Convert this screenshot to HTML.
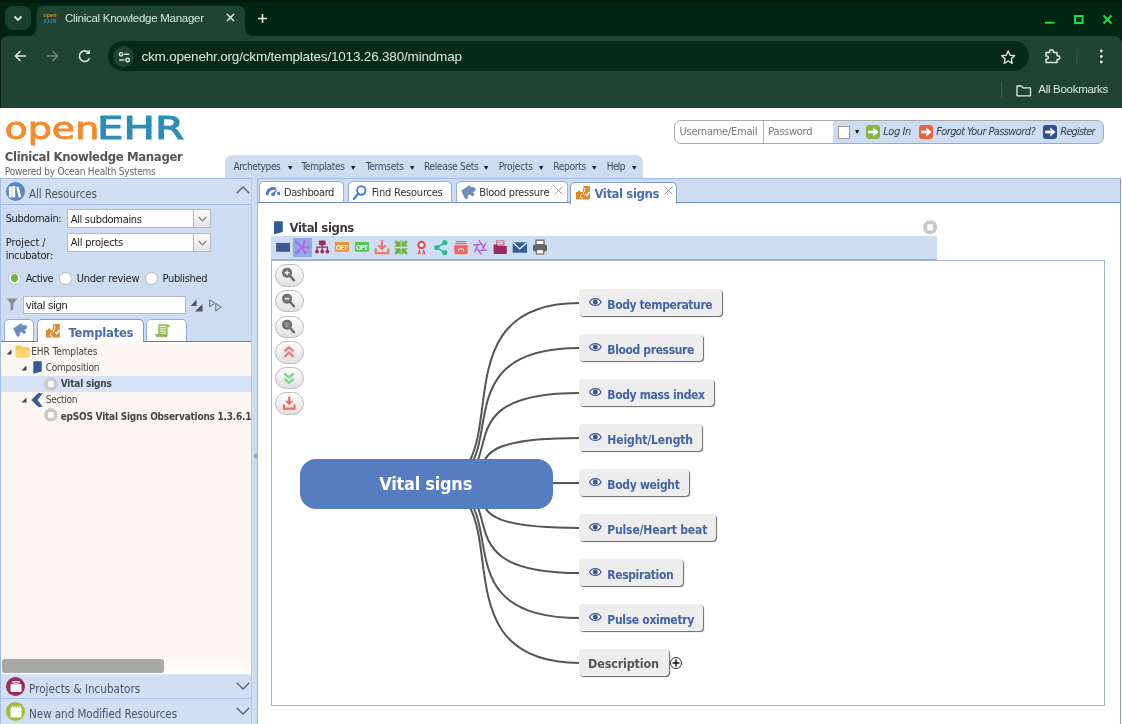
<!DOCTYPE html>
<html lang="en"><head><meta charset="utf-8"><title>Clinical Knowledge Manager</title>
<style>
*{box-sizing:border-box;margin:0;padding:0}
html,body{width:1122px;height:724px;overflow:hidden;background:#fff}
body{position:relative;font-family:'DejaVu Sans Condensed','DejaVu Sans','Liberation Sans',sans-serif;font-size:11px;color:#333;font-stretch:condensed}
.a{position:absolute}
.t{position:absolute;white-space:nowrap;display:block}
svg{position:absolute;overflow:visible}
#app{position:absolute;left:0;top:0;width:1122px;height:724px;will-change:transform}
/* chrome */
#chrome{position:absolute;left:0;top:0;width:1122px;height:108.5px;background:#012513}
#toolbar{position:absolute;left:0;top:36px;width:1122px;height:72.5px;background:#1f4432;border-radius:8px 8px 0 0}
#omni{position:absolute;left:108.4px;top:41.1px;width:920.3px;height:30px;border-radius:15px;background:#052a19}
#siteinfo{position:absolute;left:112.8px;top:45.8px;width:21.2px;height:21.2px;border-radius:50%;background:#1f4432}
#tabsearch{position:absolute;left:5px;top:6px;width:26px;height:24px;border-radius:8px;background:#1a4030}
/* app */
#hdr{position:absolute;left:0;top:108px;width:1122px;height:70px;background:#fff}
#menubar{position:absolute;left:225px;top:155px;width:418px;height:24px;background:#cedcf2;border-radius:7px 7px 0 0}
#login{position:absolute;left:674px;top:120px;width:429.5px;height:23.6px;border:1px solid #a9a9a9;border-radius:7px;background:#cedcf2;overflow:hidden}
#west{position:absolute;left:0;top:178px;width:252px;height:546px;background:#cedcf2;border:1px solid #a3bde6;border-right-color:#b4ccef;border-bottom:0}
#split{position:absolute;left:252px;top:178px;width:5px;height:546px;background:#cfddf3}
#center{position:absolute;left:257px;top:178px;width:864px;height:546px;background:#fff;border:1px solid #a2b8de;border-top-color:#9dbbe5;border-right-color:#7f9ccc;border-bottom:0}
#tabstrip{position:absolute;left:258px;top:179px;width:862px;height:24px;background:#cedcf2;border-bottom:1px solid #6f8dc0}
.tab{position:absolute;top:181px;height:21px;background:#fff;border:1px solid #8db2e3;border-bottom:0;border-radius:5px 5px 0 0}
.combo{position:absolute;left:67.3px;width:143.5px;height:19.2px;background:#fff;border:1px solid #b5b8c8}
.combo i{position:absolute;right:0;top:0;width:17px;height:17.2px;border-left:1px solid #b5b8c8;background:linear-gradient(#fdfdfd,#e2e2e2)}
.radio{position:absolute;top:272px;width:12.5px;height:12.5px;border-radius:50%;background:#fff;border:1px solid #b8b8b8}
.phdr{position:absolute;left:1px;width:250px;height:25px;background:#d2dff3;border-top:1px solid #a9c3ea}
.circ{position:absolute;left:5.9px;width:19px;height:19px;border-radius:50%}
.ltab{position:absolute;top:318.6px;height:22.4px;background:#fff;border:1px solid #8db2e3;border-bottom:0;border-radius:5px 5px 0 0}
#tree{position:absolute;left:1px;top:342px;width:250px;height:332px;background:#fbf6f1}
#tbar{position:absolute;left:271px;top:236.3px;width:666px;height:23.7px;background:#cfddf3;border-bottom:1px solid #9db2d6}
#mm{position:absolute;left:271px;top:260px;width:834px;height:446px;border:1px solid #a2b5d8;background:#fff}
.zb{position:absolute;left:275px;width:29px;height:22.6px;border:1px solid #bdbdbd;border-radius:11.3px;background:linear-gradient(#fdfdfd,#e0e0e0)}
.node{position:absolute;left:579.2px;height:26.8px;background:#ededed;border-radius:4px;box-shadow:1px 1px 1px #666}
#root{position:absolute;left:300px;top:459px;width:253px;height:50px;border-radius:16px;background:#557dbf}
</style></head>
<body>
<div id="app">

<div id="chrome">
 <div class="a" style="left:0;top:0;width:1122px;height:3px;background:#011c0d"></div>
 <div id="toolbar"></div><div class="a" style="left:0;top:0;width:1px;height:108px;background:#0a2014"></div>
 <div id="tabsearch"></div>
 <svg style="left:0;top:0" width="1122" height="108" viewBox="0 0 1122 108">
  <path d="M27.5,36.2 Q36.4,36 36.4,27 L36.4,14 Q36.4,5.7 44.6,5.7 L237,5.7 Q245.2,5.7 245.2,14 L245.2,27 Q245.2,36 254.2,36.2 Z" fill="#1f4432"/>
  <path d="M14.5,16.5 l3.5,3.5 l3.5,-3.5" fill="none" stroke="#e4ece6" stroke-width="1.8"/>
  <path d="M227,14 l7,7 M234,14 l-7,7" stroke="#e4ece6" stroke-width="1.5"/>
  <path d="M262.5,14 v9 M258,18.5 h9" stroke="#e4ece6" stroke-width="1.6"/>
  <path d="M1045,22.7 h9.5" stroke="#1fe030" stroke-width="2"/>
  <rect x="1075" y="16" width="7.5" height="7" fill="none" stroke="#1fe030" stroke-width="2"/>
  <path d="M1103.5,15.5 l8,8 M1111.5,15.5 l-8,8" stroke="#1fe030" stroke-width="2"/>
  <!-- nav -->
  <path d="M26,56 h-10 M20.5,51 l-5,5 l5,5" fill="none" stroke="#dfe8e1" stroke-width="1.6"/>
  <path d="M47,56 h10 M52.5,51 l5,5 l-5,5" fill="none" stroke="#6d8677" stroke-width="1.6"/>
  <path d="M89,53 A5.3,5.3 0 1 0 89.6,58.2" fill="none" stroke="#dfe8e1" stroke-width="1.6"/>
  <path d="M90,49.5 v4.5 h-4.5 z" fill="#dfe8e1"/>
 </svg>
 <div id="omni"></div><div id="siteinfo"></div>
 <svg style="left:0;top:0" width="1122" height="108" viewBox="0 0 1122 108">
  <circle cx="121.1" cy="54.3" r="1.7" fill="none" stroke="#dfe8e1" stroke-width="1.4"/>
  <path d="M124.4,54.3 h4.8 M119.2,60 h5.2" stroke="#dfe8e1" stroke-width="1.5"/>
  <circle cx="127.6" cy="60" r="1.7" fill="none" stroke="#dfe8e1" stroke-width="1.4"/>
  <path d="M1008.2,51 l1.9,4.2 l4.6,0.5 l-3.4,3.1 l0.9,4.5 l-4,-2.3 l-4,2.3 l0.9,-4.5 l-3.4,-3.1 l4.6,-0.5 z" fill="none" stroke="#dfe8e1" stroke-width="1.4" stroke-linejoin="round"/>
  <path d="M1046,52.5 h3.6 v-0.9 a1.9,1.9 0 0 1 3.8,0 v0.9 h3.6 v3.2 h0.9 a1.9,1.9 0 0 1 0,3.8 h-0.9 v3 h-11 v-3.2 h0.7 a1.7,1.7 0 0 0 0,-3.4 h-0.7 z" fill="none" stroke="#dfe8e1" stroke-width="1.5" stroke-linejoin="round"/>
  <path d="M1077,49 v15" stroke="#3d5a49" stroke-width="1"/>
  <circle cx="1101.3" cy="51" r="1.4" fill="#dfe8e1"/><circle cx="1101.3" cy="56.5" r="1.4" fill="#dfe8e1"/><circle cx="1101.3" cy="62" r="1.4" fill="#dfe8e1"/>
  <path d="M1001.5,82 v16" stroke="#3d5a49" stroke-width="1"/>
  <path d="M1017,86 h4.5 l1.5,1.8 h7.5 v8 h-13.5 z" fill="none" stroke="#dfe8e1" stroke-width="1.3" stroke-linejoin="round"/>
 </svg>
 <span class="t " style="left:43.30px;top:11px;line-height:9px;font-family:'Liberation Sans',sans-serif;font-size:5.5px;font-weight:700;color:#f0861f;letter-spacing:0.020px;">open</span>
 <span class="t " style="left:44.00px;top:17px;line-height:9px;font-family:'Liberation Sans',sans-serif;font-size:5.5px;font-weight:700;color:#2e8fc0;letter-spacing:0.388px;">EHR</span>
 <span class="t " style="left:65.00px;top:10px;line-height:17px;font-family:'Liberation Sans',sans-serif;font-size:11.5px;font-weight:400;color:#d9e9de;letter-spacing:-0.270px;">Clinical Knowledge Manager</span>
 <span class="t " style="left:141.40px;top:47px;line-height:20px;font-family:'Liberation Sans',sans-serif;font-size:13.5px;font-weight:400;color:#dcebe1;letter-spacing:-0.184px;">ckm.openehr.org/ckm/templates/1013.26.380/mindmap</span>
 <span class="t " style="left:1038.30px;top:81px;line-height:17px;font-family:'Liberation Sans',sans-serif;font-size:11.5px;font-weight:400;color:#dfe8e1;letter-spacing:-0.292px;">All Bookmarks</span>
</div>


<div id="hdr"></div>
<svg style="left:0;top:108px" width="200" height="45" viewBox="0 108 200 45">
 <text x="4.4" y="139.4" style="font-stretch:normal" font-family="'DejaVu Sans','Liberation Sans',sans-serif" font-size="30.8" fill="#f58a2c" stroke="#f58a2c" stroke-width="0.9" textLength="95" lengthAdjust="spacingAndGlyphs">open</text>
 <text x="97" y="139.4" style="font-stretch:normal" font-family="'DejaVu Sans','Liberation Sans',sans-serif" font-size="32.3" fill="#2c8db9" stroke="#2c8db9" stroke-width="1.1" textLength="87" lengthAdjust="spacingAndGlyphs">EHR</text>
</svg>
<span class="t " style="left:4.80px;top:147px;line-height:19px;font-family:'DejaVu Sans Condensed','DejaVu Sans','Liberation Sans',sans-serif;font-size:13px;font-weight:700;color:#555;letter-spacing:-0.343px;">Clinical Knowledge Manager</span>
<span class="t " style="left:4.80px;top:164px;line-height:15px;font-family:'DejaVu Sans Condensed','DejaVu Sans','Liberation Sans',sans-serif;font-size:10px;font-weight:400;color:#666;letter-spacing:-0.207px;">Powered by Ocean Health Systems</span>
<div id="menubar"></div>
<span class="t " style="left:233.40px;top:159px;line-height:15px;font-family:'DejaVu Sans Condensed','DejaVu Sans','Liberation Sans',sans-serif;font-size:10px;font-weight:400;color:#3d4a5c;letter-spacing:-0.357px;">Archetypes</span><svg style="left:287.7px;top:165.8px" width="4.3" height="4" viewBox="0 0 4.6 4.2"><path d="M0,0 H4.6 L2.3,4.2 Z" fill="#1a1a1a"/></svg><span class="t " style="left:301.40px;top:159px;line-height:15px;font-family:'DejaVu Sans Condensed','DejaVu Sans','Liberation Sans',sans-serif;font-size:10px;font-weight:400;color:#3d4a5c;letter-spacing:-0.247px;">Templates</span><svg style="left:351.0px;top:165.8px" width="4.3" height="4" viewBox="0 0 4.6 4.2"><path d="M0,0 H4.6 L2.3,4.2 Z" fill="#1a1a1a"/></svg><span class="t " style="left:365.70px;top:159px;line-height:15px;font-family:'DejaVu Sans Condensed','DejaVu Sans','Liberation Sans',sans-serif;font-size:10px;font-weight:400;color:#3d4a5c;letter-spacing:-0.252px;">Termsets</span><svg style="left:409.5px;top:165.8px" width="4.3" height="4" viewBox="0 0 4.6 4.2"><path d="M0,0 H4.6 L2.3,4.2 Z" fill="#1a1a1a"/></svg><span class="t " style="left:424.00px;top:159px;line-height:15px;font-family:'DejaVu Sans Condensed','DejaVu Sans','Liberation Sans',sans-serif;font-size:10px;font-weight:400;color:#3d4a5c;letter-spacing:-0.249px;">Release Sets</span><svg style="left:484.2px;top:165.8px" width="4.3" height="4" viewBox="0 0 4.6 4.2"><path d="M0,0 H4.6 L2.3,4.2 Z" fill="#1a1a1a"/></svg><span class="t " style="left:498.70px;top:159px;line-height:15px;font-family:'DejaVu Sans Condensed','DejaVu Sans','Liberation Sans',sans-serif;font-size:10px;font-weight:400;color:#3d4a5c;letter-spacing:-0.162px;">Projects</span><svg style="left:539.2px;top:165.8px" width="4.3" height="4" viewBox="0 0 4.6 4.2"><path d="M0,0 H4.6 L2.3,4.2 Z" fill="#1a1a1a"/></svg><span class="t " style="left:553.20px;top:159px;line-height:15px;font-family:'DejaVu Sans Condensed','DejaVu Sans','Liberation Sans',sans-serif;font-size:10px;font-weight:400;color:#3d4a5c;letter-spacing:-0.245px;">Reports</span><svg style="left:592.0px;top:165.8px" width="4.3" height="4" viewBox="0 0 4.6 4.2"><path d="M0,0 H4.6 L2.3,4.2 Z" fill="#1a1a1a"/></svg><span class="t " style="left:606.70px;top:159px;line-height:15px;font-family:'DejaVu Sans Condensed','DejaVu Sans','Liberation Sans',sans-serif;font-size:10px;font-weight:400;color:#3d4a5c;letter-spacing:-0.577px;">Help</span><svg style="left:631.7px;top:165.8px" width="4.3" height="4" viewBox="0 0 4.6 4.2"><path d="M0,0 H4.6 L2.3,4.2 Z" fill="#1a1a1a"/></svg>
<div id="login">
 <div class="a" style="left:0;top:0;width:89px;height:22.3px;background:#fff;border-right:1px solid #b5b5b5"></div>
 <div class="a" style="left:89px;top:0;width:69px;height:22.3px;background:#fff"></div>
 <div class="a" style="left:163px;top:5.2px;width:12.4px;height:12.4px;background:#fff;border:1px solid #9a9a9a"></div>
</div>
<svg style="left:855.1px;top:129.70000000000002px" width="4.3" height="4" viewBox="0 0 4.6 4.2"><path d="M0,0 H4.6 L2.3,4.2 Z" fill="#1a1a1a"/></svg>
<span class="t " style="left:679.50px;top:124px;line-height:16px;font-family:'DejaVu Sans Condensed','DejaVu Sans','Liberation Sans',sans-serif;font-size:11px;font-weight:400;color:#777;letter-spacing:-0.249px;">Username/Email</span>
<span class="t " style="left:768.20px;top:124px;line-height:16px;font-family:'DejaVu Sans Condensed','DejaVu Sans','Liberation Sans',sans-serif;font-size:11px;font-weight:400;color:#777;letter-spacing:-0.265px;">Password</span>
<svg style="left:866px;top:125px" width="14" height="14" viewBox="0 0 14 14"><rect width="14" height="14" rx="3" fill="#86b446"/><path d="M2.2,7 h7.5" fill="none" stroke="#fff" stroke-width="2.7"/><path d="M7.2,2.4 L12.6,7 L7.2,11.6 L7.2,9.3 L9.4,7 L7.2,4.7 Z" fill="#fff"/></svg><span class="t " style="left:883.20px;top:124px;line-height:16px;font-family:'DejaVu Sans Condensed','DejaVu Sans','Liberation Sans',sans-serif;font-size:11px;font-weight:400;color:#33404f;font-style:italic;letter-spacing:-0.438px;">Log In</span>
<svg style="left:919px;top:125px" width="14" height="14" viewBox="0 0 14 14"><rect width="14" height="14" rx="3" fill="#e8623c"/><path d="M2.2,7 h7.5" fill="none" stroke="#fff" stroke-width="2.7"/><path d="M7.2,2.4 L12.6,7 L7.2,11.6 L7.2,9.3 L9.4,7 L7.2,4.7 Z" fill="#fff"/></svg><span class="t " style="left:936.20px;top:124px;line-height:16px;font-family:'DejaVu Sans Condensed','DejaVu Sans','Liberation Sans',sans-serif;font-size:11px;font-weight:400;color:#33404f;font-style:italic;letter-spacing:-0.607px;">Forgot Your Password?</span>
<svg style="left:1043.3px;top:125px" width="14" height="14" viewBox="0 0 14 14"><rect width="14" height="14" rx="3" fill="#2f4f8f"/><path d="M2.2,7 h7.5" fill="none" stroke="#fff" stroke-width="2.7"/><path d="M7.2,2.4 L12.6,7 L7.2,11.6 L7.2,9.3 L9.4,7 L7.2,4.7 Z" fill="#fff"/></svg><span class="t " style="left:1060.20px;top:124px;line-height:16px;font-family:'DejaVu Sans Condensed','DejaVu Sans','Liberation Sans',sans-serif;font-size:11px;font-weight:400;color:#33404f;font-style:italic;letter-spacing:-0.815px;">Register</span>


<div id="west"></div><div class="a" style="left:1px;top:179px;width:250px;height:25px;background:#d2dff3"></div>
<div class="a" style="left:1px;top:204px;width:250px;height:1px;background:#99bbe8"></div>
<div class="circ" style="top:181.8px;background:#5b84c9"></div>
<svg style="left:5.4px;top:181.8px" width="20" height="20" viewBox="0 0 20 20">
 <rect x="3.9" y="4.6" width="2.9" height="11" rx="0.6" fill="#fff"/><rect x="7.3" y="4" width="2.9" height="11.6" rx="0.6" fill="#fff"/>
 <path d="M11.2,5.2 l2.5,-0.7 l2.6,10.4 l-2.5,0.7 z" fill="#fff"/>
</svg>
<span class="t " style="left:29.00px;top:186px;line-height:17px;font-family:'DejaVu Sans Condensed','DejaVu Sans','Liberation Sans',sans-serif;font-size:11.5px;font-weight:400;color:#485362;letter-spacing:-0.073px;">All Resources</span>
<svg style="left:236px;top:186px" width="14" height="8" viewBox="0 0 14 8"><path d="M0.7,7.3 L7,1 L13.3,7.3" fill="none" stroke="#56627a" stroke-width="1.3"/></svg>
<span class="t " style="left:5.70px;top:211px;line-height:16px;font-family:'DejaVu Sans Condensed','DejaVu Sans','Liberation Sans',sans-serif;font-size:11px;font-weight:400;color:#222;letter-spacing:-0.361px;">Subdomain:</span>
<div class="combo" style="top:209.3px"><i></i></div><svg style="left:198px;top:216.3px" width="9" height="6" viewBox="0 0 9 6"><path d="M0.6,0.8 L4.5,4.8 L8.4,0.8" fill="none" stroke="#777" stroke-width="1.2"/></svg>
<span class="t " style="left:70.70px;top:212px;line-height:16px;font-family:'DejaVu Sans Condensed','DejaVu Sans','Liberation Sans',sans-serif;font-size:11px;font-weight:400;color:#222;letter-spacing:-0.312px;">All subdomains</span>
<span class="t " style="left:5.70px;top:235px;line-height:16px;font-family:'DejaVu Sans Condensed','DejaVu Sans','Liberation Sans',sans-serif;font-size:11px;font-weight:400;color:#222;letter-spacing:-0.037px;">Project /</span>
<span class="t " style="left:5.70px;top:248px;line-height:16px;font-family:'DejaVu Sans Condensed','DejaVu Sans','Liberation Sans',sans-serif;font-size:11px;font-weight:400;color:#222;letter-spacing:-0.293px;">incubator:</span>
<div class="combo" style="top:233.3px"><i></i></div><svg style="left:198px;top:240.3px" width="9" height="6" viewBox="0 0 9 6"><path d="M0.6,0.8 L4.5,4.8 L8.4,0.8" fill="none" stroke="#777" stroke-width="1.2"/></svg>
<span class="t " style="left:70.70px;top:235px;line-height:16px;font-family:'DejaVu Sans Condensed','DejaVu Sans','Liberation Sans',sans-serif;font-size:11px;font-weight:400;color:#222;letter-spacing:-0.217px;">All projects</span>
<div class="radio" style="left:8.2px"></div><div class="a" style="left:10.65px;top:274.45px;width:7.6px;height:7.6px;border-radius:50%;background:#6cb33f"></div>
<div class="radio" style="left:59.1px"></div><div class="radio" style="left:145.2px"></div>
<span class="t " style="left:25.70px;top:271px;line-height:16px;font-family:'DejaVu Sans Condensed','DejaVu Sans','Liberation Sans',sans-serif;font-size:11px;font-weight:400;color:#222;letter-spacing:-0.519px;">Active</span>
<span class="t " style="left:76.70px;top:271px;line-height:16px;font-family:'DejaVu Sans Condensed','DejaVu Sans','Liberation Sans',sans-serif;font-size:11px;font-weight:400;color:#222;letter-spacing:-0.274px;">Under review</span>
<span class="t " style="left:162.50px;top:271px;line-height:16px;font-family:'DejaVu Sans Condensed','DejaVu Sans','Liberation Sans',sans-serif;font-size:11px;font-weight:400;color:#222;letter-spacing:-0.330px;">Published</span>
<svg style="left:5.9px;top:298.3px" width="12" height="13.2" viewBox="0 0 13 15"><path d="M0.3,0.5 H12.7 L8,6.5 V12.5 L5,14.5 V6.5 Z" fill="#8a8a8a"/></svg>
<div class="a" style="left:23px;top:296px;width:163px;height:18px;background:#fff;border:1px solid #b5b8c8"></div>
<span class="t " style="left:26.00px;top:297px;line-height:16px;font-family:'Liberation Sans',sans-serif;font-size:11px;font-weight:400;color:#222;letter-spacing:-0.122px;">vital sign</span>
<svg style="left:190px;top:299px" width="13" height="13" viewBox="0 0 13 13"><path d="M6.5,0.5 V7 H0.5 Z M12.5,5 V12.5 H5 Z" fill="#555"/></svg>
<svg style="left:209px;top:299px" width="13" height="13" viewBox="0 0 13 13"><path d="M0.7,0.8 L5.8,4.2 L0.7,7.6 Z M6.8,4.5 L12,8.2 L6.8,12 Z" fill="none" stroke="#667" stroke-width="1"/></svg>
<div class="a" style="left:1px;top:341px;width:250px;height:1px;background:#607bae"></div><div class="a" style="left:1px;top:342px;width:250px;height:1.5px;background:#fff;z-index:1"></div>
<div class="ltab" style="left:4px;width:29.5px"></div>
<div class="ltab" style="left:36.5px;width:107.3px;height:23.6px;border-color:#7f9ccc"></div>
<div class="ltab" style="left:145.8px;width:41px"></div>
<span class="t " style="left:68.60px;top:323px;line-height:19px;font-family:'DejaVu Sans Condensed','DejaVu Sans','Liberation Sans',sans-serif;font-size:13px;font-weight:700;color:#4a6ea9;letter-spacing:-0.268px;">Templates</span>
<svg style="left:13px;top:322.5px" width="14.5" height="14.5" viewBox="0 0 15 15"><path d="M0.6,5.8 L8.4,0.5 L10.2,2.7 Q12.6,1.9 13.8,3 Q14.9,4.4 13.8,5.8 L11.6,7.3 L13.2,9 Q13.4,10.6 11.3,11 L8.8,9 L6.3,10.5 L7.2,12.3 L4.8,14.2 L2.7,10.5 Z" fill="#6c8cbc" stroke="#6c8cbc" stroke-width="0.6" stroke-linejoin="round"/></svg>
<svg style="left:46.3px;top:324px" width="14" height="14" viewBox="0 0 14 14"><path d="M7.6,0 H13.8 V13.6 H0 V6 H2 Q1.6,4.3 3.2,4.3 Q4.8,4.3 4.4,6 H6.4 Z" fill="#e0882d"/><path d="M8,1.6 Q10.2,3.4 8.3,5.4 Q6.4,7.2 7.5,8.2 M5.9,8.3 Q3.7,9.2 4.6,11 Q5.4,12.6 7,13.4" stroke="#fff" stroke-width="1" fill="none"/><path d="M9,7.8 l1.7,1.8 l2.7,-3.6" stroke="#fff" stroke-width="1.4" fill="none"/></svg>
<svg style="left:155px;top:323.5px" width="15" height="13.5" viewBox="0 0 15 13.5"><path d="M3.2,0.3 H13 Q14.7,0.3 14.7,2 V3 H12.6 V11.5 Q12.6,13.2 10.8,13.2 H2 Q0.3,13.2 0.3,11.6 V10.4 H3.2 Z" fill="#9bbd5a"/><path d="M4.8,2.6 h6.2 M4.8,4.9 h6.2 M4.8,7.2 h6.2 M4.8,9.4 h6.2" stroke="#fff" stroke-width="1"/><path d="M0.3,10.4 H10.6 V11.6 Q10.6,13.2 12,13.2" fill="none" stroke="#7da040" stroke-width="0.7"/></svg>

<div id="tree">
 <div class="a" style="left:0;top:34px;width:250px;height:16px;background:#d6e3f6"></div>
 <div class="a" style="left:0;top:316px;width:250px;height:16px;background:linear-gradient(rgba(255,255,255,0),#fff)"></div>
 <div class="a" style="left:1px;top:317.1px;width:161.5px;height:13.9px;border-radius:3px;background:#a9a9a7"></div>
</div>
<svg style="left:6px;top:349px" width="6" height="6" viewBox="0 0 6 6"><path d="M5.5,0.5 V5.5 H0.5 Z" fill="#444"/></svg>
<svg style="left:15px;top:345px" width="15" height="13" viewBox="0 0 15 13"><path d="M0.5,2 q0,-1.5 1.5,-1.5 h3.5 l1.5,1.8 h6 q1.5,0 1.5,1.5 v7 q0,1.5 -1.5,1.5 h-11 q-1.5,0 -1.5,-1.5 z" fill="#f7c64a"/><path d="M0.5,5 h14 v6 q0,1.5 -1.5,1.5 h-11 q-1.5,0 -1.5,-1.5 z" fill="#fbd770"/></svg>
<span class="t " style="left:31.20px;top:344px;line-height:15px;font-family:'DejaVu Sans Condensed','DejaVu Sans','Liberation Sans',sans-serif;font-size:10px;font-weight:400;color:#444;letter-spacing:-0.070px;">EHR Templates</span>
<svg style="left:21px;top:365px" width="6" height="6" viewBox="0 0 6 6"><path d="M5.5,0.5 V5.5 H0.5 Z" fill="#444"/></svg>
<svg style="left:33px;top:360.5px" width="9" height="13" viewBox="0 0 9 13"><path d="M1.2,0.3 H8.7 V10.6 L0.3,12.7 V1.2 Q0.3,0.3 1.2,0.3 Z" fill="#325c99"/></svg>
<span class="t " style="left:45.70px;top:360px;line-height:15px;font-family:'DejaVu Sans Condensed','DejaVu Sans','Liberation Sans',sans-serif;font-size:10px;font-weight:400;color:#444;letter-spacing:-0.239px;">Composition</span>
<svg style="left:44.2px;top:376.6px" width="13.8" height="13.8" viewBox="0 0 15 15"><circle cx="7.5" cy="7.5" r="7.3" fill="#c9c9c7"/><rect x="4.4" y="4.3" width="6.2" height="6.6" rx="1" fill="#fbfbfb"/></svg>
<span class="t " style="left:60.80px;top:376px;line-height:15px;font-family:'DejaVu Sans Condensed','DejaVu Sans','Liberation Sans',sans-serif;font-size:10px;font-weight:700;color:#444;letter-spacing:-0.209px;">Vital signs</span>
<svg style="left:21px;top:397px" width="6" height="6" viewBox="0 0 6 6"><path d="M5.5,0.5 V5.5 H0.5 Z" fill="#444"/></svg>
<svg style="left:30.5px;top:393px" width="12" height="14" viewBox="0 0 12 14"><path d="M7,0.3 H11.7 L6.5,7 L11.7,13.7 H7 L0.3,7 Z" fill="#325c99"/></svg>
<span class="t " style="left:45.70px;top:392px;line-height:15px;font-family:'DejaVu Sans Condensed','DejaVu Sans','Liberation Sans',sans-serif;font-size:10px;font-weight:400;color:#444;letter-spacing:-0.273px;">Section</span>
<svg style="left:44.2px;top:408.4px" width="13.8" height="13.8" viewBox="0 0 15 15"><circle cx="7.5" cy="7.5" r="7.3" fill="#c9c9c7"/><rect x="4.4" y="4.3" width="6.2" height="6.6" rx="1" fill="#fbfbfb"/></svg>
<div class="a" style="left:60px;top:408px;width:191px;height:17px;overflow:hidden"><span class="t " style="left:0.70px;top:1px;line-height:15px;font-family:'DejaVu Sans Condensed','DejaVu Sans','Liberation Sans',sans-serif;font-size:10px;font-weight:700;color:#444;letter-spacing:-0.229px;">epSOS Vital Signs Observations 1.3.6.1.</span></div>
<div id="split"></div>
<svg style="left:252.5px;top:452px" width="4" height="8" viewBox="0 0 4 8"><path d="M3.8,0.5 V7.5 L0.3,4 Z" fill="#8aa3cf"/></svg>
<div class="phdr" style="top:674px;border-top-color:#dfe8f6"></div><div class="phdr" style="top:697.7px;height:27px"></div>
<div class="circ" style="top:677.3px;background:#a02a5a"></div>
<svg style="left:6px;top:677px" width="20" height="20" viewBox="0 0 20 20"><path d="M7,6.5 v-2 h6 v2" fill="none" stroke="#fff" stroke-width="1.2"/><rect x="4.5" y="7" width="11" height="8" rx="1" fill="#fff"/><rect x="8" y="5.5" width="4" height="2.5" fill="#f3c9d8"/></svg>
<div class="circ" style="top:702.3px;background:#9abe3d"></div>
<svg style="left:6px;top:702px" width="20" height="20" viewBox="0 0 20 20"><rect x="4.5" y="5.5" width="11" height="10" rx="1" fill="#fff"/><path d="M6.5,4 v3 M9,4 v3 M11.5,4 v3 M14,4 v3" stroke="#fff" stroke-width="1"/></svg>
<span class="t " style="left:29.10px;top:681px;line-height:17px;font-family:'DejaVu Sans Condensed','DejaVu Sans','Liberation Sans',sans-serif;font-size:11.5px;font-weight:400;color:#485362;letter-spacing:0.041px;">Projects &amp; Incubators</span>
<span class="t " style="left:29.10px;top:706px;line-height:17px;font-family:'DejaVu Sans Condensed','DejaVu Sans','Liberation Sans',sans-serif;font-size:11.5px;font-weight:400;color:#485362;letter-spacing:-0.033px;">New and Modified Resources</span>
<svg style="left:236px;top:682px" width="14" height="8" viewBox="0 0 14 8"><path d="M0.7,0.7 L7,7 L13.3,0.7" fill="none" stroke="#56627a" stroke-width="1.3"/></svg><svg style="left:236px;top:707px" width="14" height="8" viewBox="0 0 14 8"><path d="M0.7,0.7 L7,7 L13.3,0.7" fill="none" stroke="#56627a" stroke-width="1.3"/></svg>


<div id="center"></div>
<div id="tabstrip"></div>
<div class="tab" style="left:259.3px;width:85.2px"></div>
<svg style="left:266px;top:186px" width="15" height="11" viewBox="266 186 15 11"><path d="M267.36,195 A5.7,5.7 0 0 1 275.85,189.26" fill="none" stroke="#4a7dc9" stroke-width="2.8"/><path d="M278.17,191.79 A5.7,5.7 0 0 1 278.64,195" fill="none" stroke="#4a7dc9" stroke-width="2.8"/><path d="M272.1,193.2 L277.8,188.9 L274.2,195 Z" fill="#4a7dc9"/><circle cx="273" cy="194.3" r="1.9" fill="#4a7dc9"/></svg>
<span class="t " style="left:284.00px;top:185px;line-height:16px;font-family:'DejaVu Sans Condensed','DejaVu Sans','Liberation Sans',sans-serif;font-size:11px;font-weight:400;color:#333;letter-spacing:-0.411px;">Dashboard</span>
<div class="tab" style="left:347.5px;width:104.7px"></div>
<svg style="left:353px;top:184.5px" width="14" height="15" viewBox="0 0 14 15"><circle cx="8.3" cy="5.5" r="4.2" fill="#fff" stroke="#4a7dc9" stroke-width="1.9"/><path d="M5.3,8.7 L0.9,13.8" stroke="#4a7dc9" stroke-width="2.3" stroke-linecap="round"/></svg>
<span class="t " style="left:371.70px;top:185px;line-height:16px;font-family:'DejaVu Sans Condensed','DejaVu Sans','Liberation Sans',sans-serif;font-size:11px;font-weight:400;color:#333;letter-spacing:-0.209px;">Find Resources</span>
<div class="tab" style="left:455.5px;width:112.2px"></div>
<svg style="left:460.5px;top:184.5px" width="15" height="15" viewBox="0 0 15 15"><path d="M0.6,5.8 L8.4,0.5 L10.2,2.7 Q12.6,1.9 13.8,3 Q14.9,4.4 13.8,5.8 L11.6,7.3 L13.2,9 Q13.4,10.6 11.3,11 L8.8,9 L6.3,10.5 L7.2,12.3 L4.8,14.2 L2.7,10.5 Z" fill="#6c8cbc" stroke="#6c8cbc" stroke-width="0.6" stroke-linejoin="round"/></svg>
<span class="t " style="left:479.20px;top:185px;line-height:16px;font-family:'DejaVu Sans Condensed','DejaVu Sans','Liberation Sans',sans-serif;font-size:11px;font-weight:400;color:#333;letter-spacing:-0.268px;">Blood pressure</span>
<svg style="left:553.5px;top:186px" width="9" height="9" viewBox="0 0 9 9"><path d="M0.5,0.5 L8.5,8.5 M8.5,0.5 L0.5,8.5" stroke="#999" stroke-width="1"/></svg>
<div class="tab" style="left:570.4px;width:106.3px;top:182.3px;height:22px;border-color:#7f9ccc"></div>
<svg style="left:576px;top:186px" width="14" height="14" viewBox="0 0 14 14"><path d="M7.6,0 H13.8 V13.6 H0 V6 H2 Q1.6,4.3 3.2,4.3 Q4.8,4.3 4.4,6 H6.4 Z" fill="#e0882d"/><path d="M8,1.6 Q10.2,3.4 8.3,5.4 Q6.4,7.2 7.5,8.2 M5.9,8.3 Q3.7,9.2 4.6,11 Q5.4,12.6 7,13.4" stroke="#fff" stroke-width="1" fill="none"/><path d="M9,7.8 l1.7,1.8 l2.7,-3.6" stroke="#fff" stroke-width="1.4" fill="none"/></svg>
<span class="t " style="left:594.40px;top:184px;line-height:19px;font-family:'DejaVu Sans Condensed','DejaVu Sans','Liberation Sans',sans-serif;font-size:13px;font-weight:700;color:#4a6ea9;letter-spacing:-0.403px;">Vital signs</span>
<svg style="left:664.3px;top:185.5px" width="9" height="9" viewBox="0 0 9 9"><path d="M0.5,0.5 L8.5,8.5 M8.5,0.5 L0.5,8.5" stroke="#999" stroke-width="1"/></svg>
<svg style="left:273.1px;top:220.8px" width="10.8" height="13.6" viewBox="0 0 9 13"><path d="M1.2,0.3 H8.7 V10.6 L0.3,12.7 V1.2 Q0.3,0.3 1.2,0.3 Z" fill="#325c99"/></svg>
<span class="t " style="left:289.50px;top:218px;line-height:19px;font-family:'DejaVu Sans Condensed','DejaVu Sans','Liberation Sans',sans-serif;font-size:13px;font-weight:700;color:#3a3a3a;letter-spacing:-0.423px;">Vital signs</span>
<svg style="left:923px;top:220.1px" width="14.4" height="14.4" viewBox="0 0 15 15"><circle cx="7.5" cy="7.5" r="7.3" fill="#c9c9c7"/><rect x="4.4" y="4.3" width="6.2" height="6.6" rx="1" fill="#fbfbfb"/></svg>


<div id="tbar"></div>
<div class="a" style="left:293.2px;top:238.2px;width:18.5px;height:18.5px;background:#8faae0"></div>
<svg style="left:271px;top:236px" width="290" height="24" viewBox="271 236 290 24">
 <rect x="276.1" y="242.9" width="13.8" height="8.9" fill="#3b5796"/>
 <g stroke="#bb5ff0" stroke-width="1.8" stroke-linecap="round"><path d="M302.1,247.3 L296.4,242.2 M302.1,247.3 L304.6,241.1 M302.1,247.3 L308,247.2 M302.1,247.3 L305.2,252.7 M302.1,247.3 L296.6,252.4"/></g><g fill="#bb5ff0"><circle cx="302.1" cy="247.3" r="2.3"/><circle cx="296.4" cy="242.2" r="1.5"/><circle cx="304.6" cy="241.1" r="1.5"/><circle cx="308" cy="247.2" r="1.5"/><circle cx="305.2" cy="252.7" r="1.5"/><circle cx="296.6" cy="252.4" r="1.5"/></g>
 <g fill="#9c2a5c"><rect x="319" y="240.5" width="6.5" height="4.6"/><circle cx="317" cy="251.6" r="1.9"/><circle cx="322.2" cy="251.6" r="1.9"/><circle cx="327.4" cy="251.6" r="1.9"/></g>
 <path d="M322.2,245 v5 M317,250 v-2.8 h10.4 v2.8" fill="none" stroke="#9c2a5c" stroke-width="1.3"/>
 <rect x="334.8" y="242" width="14.2" height="9.8" rx="0.8" fill="#e8923a"/>
 <rect x="354.9" y="242" width="14.2" height="9.8" rx="0.8" fill="#5cc05c"/>
 <g fill="none" stroke="#f07c6c" stroke-width="2.2"><path d="M382,240 v8 M378.3,245.3 l3.7,3.7 l3.7,-3.7 M375.8,248.5 v4.6 h12.4 v-4.6"/></g>
 <g fill="#6db33f" stroke="#6db33f" stroke-width="0.6" stroke-linejoin="round"><path d="M394.6,242 l1.6,-1.6 l2.2,2.2 l1.9,-1.9 v5.6 h-5.6 l1.9,-1.9 z"/><path d="M407.6,242 l-1.6,-1.6 l-2.2,2.2 l-1.9,-1.9 v5.6 h5.6 l-1.9,-1.9 z"/><path d="M394.6,253 l1.6,1.6 l2.2,-2.2 l1.9,1.9 v-5.6 h-5.6 l1.9,1.9 z"/><path d="M407.6,253 l-1.6,1.6 l-2.2,-2.2 l-1.9,1.9 v-5.6 h5.6 l-1.9,1.9 z"/></g>
 <circle cx="421.5" cy="245" r="3.2" fill="#fff" stroke="#e0524e" stroke-width="2.2"/>
 <path d="M419.3,248.6 l-2,5.8 l2.6,-1.2 l1.3,2 z M423.7,248.6 l2,5.8 l-2.6,-1.2 l-1.3,2 z" fill="#e0524e"/>
 <g fill="#2dbf8e"><circle cx="436.8" cy="247.6" r="2.7"/><circle cx="444.8" cy="242.6" r="2.6"/><circle cx="444.8" cy="252.6" r="2.6"/></g>
 <path d="M444.8,242.6 L436.8,247.6 L444.8,252.6" fill="none" stroke="#2dbf8e" stroke-width="1.7"/>
 <path d="M456.2,241 h9.6 v1.2 h-9.6 z M455.2,243 h11.6 v1.3 h-11.6 z M454.3,245.2 h13.4 v7.3 q0,1.8 -1.8,1.8 h-9.8 q-1.8,0 -1.8,-1.8 z" fill="#f2625c"/>
 <path d="M458.3,251.3 v-1.4 q0,-0.9 0.9,-0.9 h3.6 q0.9,0 0.9,0.9 v1.4" fill="none" stroke="#fff" stroke-width="1"/>
 <g fill="#a960f0" stroke="#a960f0" stroke-width="0.9" stroke-linejoin="round"><path transform="rotate(0 480.1 247.5)" d="M478.82,240.21 Q481.00,242.38 482.78,245.41 L481.32,245.20 Q479.95,243.10 478.82,240.21 Z"/><path transform="rotate(60 480.1 247.5)" d="M478.82,240.21 Q481.00,242.38 482.78,245.41 L481.32,245.20 Q479.95,243.10 478.82,240.21 Z"/><path transform="rotate(120 480.1 247.5)" d="M478.82,240.21 Q481.00,242.38 482.78,245.41 L481.32,245.20 Q479.95,243.10 478.82,240.21 Z"/><path transform="rotate(180 480.1 247.5)" d="M478.82,240.21 Q481.00,242.38 482.78,245.41 L481.32,245.20 Q479.95,243.10 478.82,240.21 Z"/><path transform="rotate(240 480.1 247.5)" d="M478.82,240.21 Q481.00,242.38 482.78,245.41 L481.32,245.20 Q479.95,243.10 478.82,240.21 Z"/><path transform="rotate(300 480.1 247.5)" d="M478.82,240.21 Q481.00,242.38 482.78,245.41 L481.32,245.20 Q479.95,243.10 478.82,240.21 Z"/></g>
 <path d="M496,240.2 h8.5 v6 h-8.5 z" fill="#c9829f"/><path d="M497.5,242 h5.5 M497.5,243.8 h5.5" stroke="#fff" stroke-width="0.8"/>
 <path d="M493.6,244.5 h3.2 l1.2,1.6 h8.8 v6.6 q0,1.4 -1.4,1.4 h-10.4 q-1.4,0 -1.4,-1.4 z" fill="#9c2a5c"/>
 <rect x="512.7" y="242.3" width="14.3" height="10.4" fill="#325c99"/><path d="M513.2,242.8 L519.85,249 L526.5,242.8" fill="none" stroke="#fff" stroke-width="1.2"/>
 <rect x="536" y="240.2" width="8" height="4.5" fill="#fff" stroke="#666" stroke-width="1.3"/>
 <rect x="533" y="244.6" width="14" height="6.8" rx="1.2" fill="#666"/><rect x="536.3" y="249.7" width="7.4" height="4.3" fill="#fff" stroke="#666" stroke-width="1.1"/>
</svg>
<span class="t " style="left:336.00px;top:243px;line-height:10px;font-family:'Liberation Sans',sans-serif;font-size:6.5px;font-weight:700;color:#fff;letter-spacing:-0.787px;">OET</span>
<span class="t " style="left:356.10px;top:243px;line-height:10px;font-family:'Liberation Sans',sans-serif;font-size:6.5px;font-weight:700;color:#fff;letter-spacing:-0.787px;">OPT</span>


<div id="mm"></div>
<div class="zb" style="top:264.20px"></div><svg style="left:275px;top:264.20px" width="29" height="22.6" viewBox="0 0 29 23"><circle cx="12" cy="8.8" r="4.3" fill="#777" stroke="#6a6a6a" stroke-width="1.6"/><path d="M15.2,12.2 L19,16.6" stroke="#6a6a6a" stroke-width="2.5" stroke-linecap="round"/><path d="M9.7,8.8 h4.6 M12,6.5 v4.6" stroke="#f2f2f2" stroke-width="1.5"/></svg><div class="zb" style="top:289.85px"></div><svg style="left:275px;top:289.85px" width="29" height="22.6" viewBox="0 0 29 23"><circle cx="12" cy="8.8" r="4.3" fill="#777" stroke="#6a6a6a" stroke-width="1.6"/><path d="M15.2,12.2 L19,16.6" stroke="#6a6a6a" stroke-width="2.5" stroke-linecap="round"/><path d="M9.7,8.8 h4.6" stroke="#f2f2f2" stroke-width="1.6"/></svg><div class="zb" style="top:315.50px"></div><svg style="left:275px;top:315.50px" width="29" height="22.6" viewBox="0 0 29 23"><circle cx="12" cy="8.8" r="4.3" fill="#777" stroke="#6a6a6a" stroke-width="1.6"/><path d="M15.2,12.2 L19,16.6" stroke="#6a6a6a" stroke-width="2.5" stroke-linecap="round"/><path d="M9.2,8.8 h5.6 M12,6 v5.6 M10,6.8 h4 M10,10.8 h4" stroke="#aaa" stroke-width="0.7"/></svg><div class="zb" style="top:341.15px"></div><svg style="left:275px;top:341.15px" width="29" height="22.6" viewBox="0 0 29 23"><path d="M9.3,10.6 L14,6.5 L18.7,10.6 M9.3,16 L14,11.9 L18.7,16" fill="none" stroke="#f47c7c" stroke-width="2.5"/></svg><div class="zb" style="top:366.80px"></div><svg style="left:275px;top:366.80px" width="29" height="22.6" viewBox="0 0 29 23"><path d="M9.3,6.6 L14,10.7 L18.7,6.6 M9.3,12 L14,16.1 L18.7,12" fill="none" stroke="#8fd28a" stroke-width="2.5"/></svg><div class="zb" style="top:392.45px"></div><svg style="left:275px;top:392.45px" width="29" height="22.6" viewBox="0 0 29 23"><path d="M14.2,4.6 v7 M8.8,12.6 v4.4 h10.8 v-4.4" fill="none" stroke="#f26b5e" stroke-width="2.2"/><path d="M10,9 h8.4 l-4.2,4.6 z" fill="#f26b5e"/></svg>
<svg style="left:272px;top:261px" width="832" height="443" viewBox="272 261 832 443"><g fill="none" stroke="#555" stroke-width="2"><path d="M426.75,484.0 C528.58,484.0 426.75,303.0 579.5,303.0"/><path d="M426.75,484.0 C528.58,484.0 426.75,348.0 579.5,348.0"/><path d="M426.75,484.0 C528.58,484.0 426.75,393.0 579.5,393.0"/><path d="M426.75,484.0 C528.58,484.0 426.75,438.0 579.5,438.0"/><path d="M426.75,484.0 C528.58,484.0 426.75,483.0 579.5,483.0"/><path d="M426.75,484.0 C528.58,484.0 426.75,528.0 579.5,528.0"/><path d="M426.75,484.0 C528.58,484.0 426.75,573.0 579.5,573.0"/><path d="M426.75,484.0 C528.58,484.0 426.75,618.0 579.5,618.0"/><path d="M426.75,484.0 C528.58,484.0 426.75,662.9 579.5,662.9"/></g></svg>
<div id="root"></div>
<span class="t " style="left:379.30px;top:471px;line-height:25px;font-family:'DejaVu Sans Condensed','DejaVu Sans','Liberation Sans',sans-serif;font-size:18px;font-weight:700;color:#fff;letter-spacing:-0.258px;">Vital signs</span>
<div class="node" style="top:289.0px;width:142.4px"></div><svg style="left:588.5px;top:298.3px" width="12.6" height="8" viewBox="0 0 12.6 8"><path d="M0.5,4 C2.6,-0.6 10,-0.6 12.1,4 C10,8.6 2.6,8.6 0.5,4 Z" fill="#f4f7fc" stroke="#36578f" stroke-width="1.15"/><circle cx="6.3" cy="3.9" r="2.5" fill="#36578f"/></svg><span class="t " style="left:607.30px;top:296px;line-height:18px;font-family:'DejaVu Sans Condensed','DejaVu Sans','Liberation Sans',sans-serif;font-size:12px;font-weight:700;color:#4264a4;letter-spacing:-0.379px;">Body temperature</span><div class="node" style="top:334.0px;width:124.0px"></div><svg style="left:588.5px;top:343.3px" width="12.6" height="8" viewBox="0 0 12.6 8"><path d="M0.5,4 C2.6,-0.6 10,-0.6 12.1,4 C10,8.6 2.6,8.6 0.5,4 Z" fill="#f4f7fc" stroke="#36578f" stroke-width="1.15"/><circle cx="6.3" cy="3.9" r="2.5" fill="#36578f"/></svg><span class="t " style="left:607.30px;top:341px;line-height:18px;font-family:'DejaVu Sans Condensed','DejaVu Sans','Liberation Sans',sans-serif;font-size:12px;font-weight:700;color:#4264a4;letter-spacing:-0.371px;">Blood pressure</span><div class="node" style="top:379.0px;width:134.7px"></div><svg style="left:588.5px;top:388.3px" width="12.6" height="8" viewBox="0 0 12.6 8"><path d="M0.5,4 C2.6,-0.6 10,-0.6 12.1,4 C10,8.6 2.6,8.6 0.5,4 Z" fill="#f4f7fc" stroke="#36578f" stroke-width="1.15"/><circle cx="6.3" cy="3.9" r="2.5" fill="#36578f"/></svg><span class="t " style="left:607.30px;top:386px;line-height:18px;font-family:'DejaVu Sans Condensed','DejaVu Sans','Liberation Sans',sans-serif;font-size:12px;font-weight:700;color:#4264a4;letter-spacing:-0.358px;">Body mass index</span><div class="node" style="top:424.0px;width:122.7px"></div><svg style="left:588.5px;top:433.3px" width="12.6" height="8" viewBox="0 0 12.6 8"><path d="M0.5,4 C2.6,-0.6 10,-0.6 12.1,4 C10,8.6 2.6,8.6 0.5,4 Z" fill="#f4f7fc" stroke="#36578f" stroke-width="1.15"/><circle cx="6.3" cy="3.9" r="2.5" fill="#36578f"/></svg><span class="t " style="left:607.30px;top:431px;line-height:18px;font-family:'DejaVu Sans Condensed','DejaVu Sans','Liberation Sans',sans-serif;font-size:12px;font-weight:700;color:#4264a4;letter-spacing:-0.112px;">Height/Length</span><div class="node" style="top:469.0px;width:109.6px"></div><svg style="left:588.5px;top:478.3px" width="12.6" height="8" viewBox="0 0 12.6 8"><path d="M0.5,4 C2.6,-0.6 10,-0.6 12.1,4 C10,8.6 2.6,8.6 0.5,4 Z" fill="#f4f7fc" stroke="#36578f" stroke-width="1.15"/><circle cx="6.3" cy="3.9" r="2.5" fill="#36578f"/></svg><span class="t " style="left:607.30px;top:476px;line-height:18px;font-family:'DejaVu Sans Condensed','DejaVu Sans','Liberation Sans',sans-serif;font-size:12px;font-weight:700;color:#4264a4;letter-spacing:-0.315px;">Body weight</span><div class="node" style="top:514.0px;width:137.0px"></div><svg style="left:588.5px;top:523.3px" width="12.6" height="8" viewBox="0 0 12.6 8"><path d="M0.5,4 C2.6,-0.6 10,-0.6 12.1,4 C10,8.6 2.6,8.6 0.5,4 Z" fill="#f4f7fc" stroke="#36578f" stroke-width="1.15"/><circle cx="6.3" cy="3.9" r="2.5" fill="#36578f"/></svg><span class="t " style="left:607.30px;top:521px;line-height:18px;font-family:'DejaVu Sans Condensed','DejaVu Sans','Liberation Sans',sans-serif;font-size:12px;font-weight:700;color:#4264a4;letter-spacing:-0.158px;">Pulse/Heart beat</span><div class="node" style="top:559.0px;width:103.4px"></div><svg style="left:588.5px;top:568.3px" width="12.6" height="8" viewBox="0 0 12.6 8"><path d="M0.5,4 C2.6,-0.6 10,-0.6 12.1,4 C10,8.6 2.6,8.6 0.5,4 Z" fill="#f4f7fc" stroke="#36578f" stroke-width="1.15"/><circle cx="6.3" cy="3.9" r="2.5" fill="#36578f"/></svg><span class="t " style="left:607.30px;top:566px;line-height:18px;font-family:'DejaVu Sans Condensed','DejaVu Sans','Liberation Sans',sans-serif;font-size:12px;font-weight:700;color:#4264a4;letter-spacing:-0.368px;">Respiration</span><div class="node" style="top:604.0px;width:124.0px"></div><svg style="left:588.5px;top:613.3px" width="12.6" height="8" viewBox="0 0 12.6 8"><path d="M0.5,4 C2.6,-0.6 10,-0.6 12.1,4 C10,8.6 2.6,8.6 0.5,4 Z" fill="#f4f7fc" stroke="#36578f" stroke-width="1.15"/><circle cx="6.3" cy="3.9" r="2.5" fill="#36578f"/></svg><span class="t " style="left:607.30px;top:611px;line-height:18px;font-family:'DejaVu Sans Condensed','DejaVu Sans','Liberation Sans',sans-serif;font-size:12px;font-weight:700;color:#4264a4;letter-spacing:-0.306px;">Pulse oximetry</span><div class="node" style="top:649px;width:89.6px"></div><span class="t " style="left:588.10px;top:655px;line-height:18px;font-family:'DejaVu Sans Condensed','DejaVu Sans','Liberation Sans',sans-serif;font-size:12.5px;font-weight:700;color:#555;letter-spacing:-0.185px;">Description</span><div class="a" style="left:669.8px;top:656.8px;width:12px;height:12px;border-radius:50%;border:1px solid #333;background:#fff"></div><svg style="left:669.8px;top:656.8px" width="12" height="12" viewBox="0 0 12 12"><path d="M6,2.6 v6.8 M2.6,6 h6.8" stroke="#111" stroke-width="1.5"/></svg>

</div>
</body></html>
